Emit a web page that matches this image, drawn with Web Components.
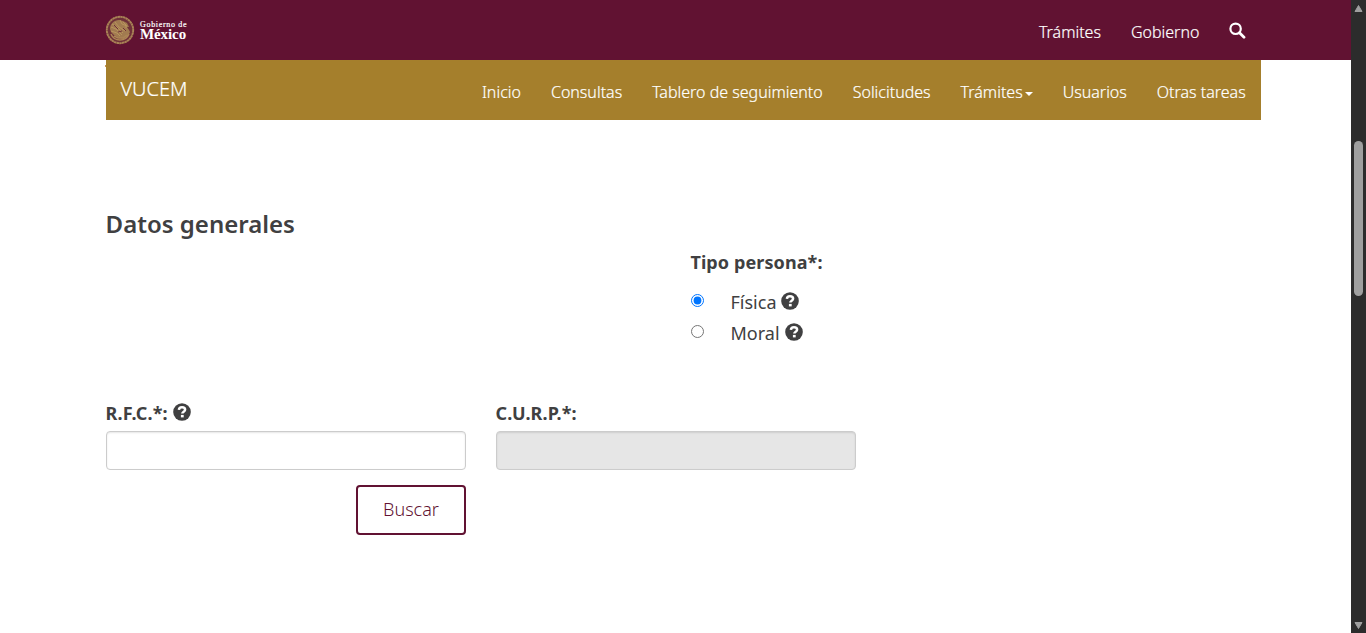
<!DOCTYPE html>
<html lang="es">
<head>
<meta charset="utf-8">
<title>VUCEM</title>
<style>
html,body{margin:0;height:100%;overflow:hidden;background:#fff}
body{font-family:"Noto Sans","Open Sans",sans-serif;font-size:18px;line-height:26px;color:#404041}
</style>
</head>
<body>
<vu-page></vu-page>
<script>
const define=(name,html,setup)=>customElements.define(name,class extends HTMLElement{
  connectedCallback(){
    if(this.shadowRoot)return;
    const root=this.attachShadow({mode:'open'});
    const t=document.createElement('template');
    t.innerHTML=html;
    root.append(t.content.cloneNode(true));
    if(setup)setup(this,root);
  }
});

define('gov-seal',`<style>:host{display:block;width:30px;height:30px}svg{display:block}</style>
<svg width="30" height="30" viewBox="0 0 30 30" fill="none">
<circle cx="15" cy="15" r="14" fill="#6f3039"/>
<circle cx="15" cy="15" r="13.2" stroke-width="1.9" stroke="#a98356" stroke-dasharray="2.4 .3"/>
<path d="M5 14c0-5 4-9 9-9l4 1 4 2 2 4-2 0 2 3 1 2-2 4-4 3-5-1-5-3-3-3z" fill="#a17b50"/>
<path d="M7 9l5 3 6 6M6 12l5 2 6 6M10 7l4 5 6 4M15 5l2 4 5 2M18 7l3 3v3M6 16l6 2 3 3" stroke-width=".9" stroke="#bb965f"/>
<path d="M9 10l4 4M13 17l4-1M18 13l3 3" stroke-width="1" stroke="#6f3039"/>
<path d="M6 19c2 5 5 6 9 6s7-1 9-6M9 21l4 2h5l4-3" stroke-width="1.5" stroke="#ac8555"/>
</svg>`);

define('gov-brand',`<style>:host{display:flex;align-items:center;gap:5px;color:#fff;font-family:"Liberation Serif","Noto Serif",serif;font-weight:700}
.t{display:block;width:48px;white-space:nowrap}.a{display:block;font-size:8px;line-height:8px;letter-spacing:.68px;font-weight:400;-webkit-text-stroke:.2px}.b{display:block;font-size:15px;line-height:10px;letter-spacing:-.1px;font-weight:700}</style>
<gov-seal></gov-seal><span class="t"><span class="a">Gobierno de</span><span class="b">México</span></span>`);

define('nav-link',`<style>:host{display:flex;align-items:center;font-size:16px;line-height:24px;font-weight:300;white-space:nowrap;color:#fff;-webkit-text-stroke:.2px}
i{display:none;border:4px solid transparent;border-top-color:#fff;border-bottom:0;margin:3px 0 0 2px}:host([caret]) i{display:block}</style><slot></slot><i></i>`);

define('gov-bar',`<style>:host{display:flex;justify-content:space-between;height:60px;box-sizing:border-box;padding:0 104.6px 0 105px;background:#611232}
nav{display:flex;gap:30px;padding-top:20px;align-items:flex-start}svg{display:block;margin-top:2px}gov-brand{height:59px}</style>
<gov-brand></gov-brand><nav><nav-link>Trámites</nav-link><nav-link>Gobierno</nav-link>
<svg width="17" height="17" viewBox="0 0 17 17" fill="none" stroke="#fff"><circle cx="6.6" cy="6.8" r="5.2" stroke-width="2.2"/><path d="M10.5 10.7l4.5 4.5" stroke-width="2.8" stroke-linecap="round"/></svg></nav>`);

define('app-bar',`<style>:host{position:relative;display:flex;justify-content:space-between;height:60px;box-sizing:border-box;margin:0 90px 0 106px;padding:0 15.3px 0 14.4px;background:#a57f2c;color:#fff}
:host::before{content:"";position:absolute;left:-1px;top:5px;width:1px;height:2px;background:#c9975a}
b{font-weight:300;font-size:20px;line-height:28px;padding-top:15px;-webkit-text-stroke:.2px}nav{display:flex;gap:30px;padding-top:20px;align-items:flex-start}</style>
<b>VUCEM</b><nav><nav-link>Inicio</nav-link><nav-link>Consultas</nav-link><nav-link>Tablero de seguimiento</nav-link><nav-link>Solicitudes</nav-link><nav-link caret>Trámites</nav-link><nav-link>Usuarios</nav-link><nav-link>Otras tareas</nav-link></nav>`);

define('help-icon',`<style>:host{display:inline-block;width:18px;height:18px;vertical-align:-1px}svg{display:block}</style>
<svg width="18" height="18" viewBox="0 0 18 18"><circle cx="9" cy="9" r="8.8" fill="#404041"/><path d="M5.9 6.9C6 5 7.2 4.3 9 4.3c1.9 0 3.1.9 3.1 2.4 0 2-2.8 2-2.8 3.9" fill="none" stroke="#fff" stroke-width="2.5"/><path d="M7.9 11.9h2.8v2.5H7.9z" fill="#fff"/></svg>`);

define('radio-option',`<style>:host{display:flex;height:31px;align-items:flex-start}input{margin:6px 26.5px 0 1px;width:13px;height:13px;flex:none}label{line-height:28px;white-space:nowrap}help-icon{margin-left:.3px}</style>
<input type="radio"><label><slot></slot> <help-icon></help-icon></label>`,(h,r)=>{r.querySelector('input').checked=h.hasAttribute('checked')});

define('text-field',`<style>:host{display:block;width:360px}label{display:block;font-weight:700;font-size:18px;line-height:26px;height:31px;white-space:nowrap;letter-spacing:.1px;margin-left:-.4px}
input{display:block;box-sizing:border-box;width:100%;height:39px;border:1px solid #ccc;border-radius:4px;background:#fff;box-shadow:inset 0 1px 2px rgba(0,0,0,.1);margin:0;padding:6px 12px;font:inherit}input:disabled{background:#e6e6e6}</style>
<label><slot></slot></label><input>`,(h,r)=>{r.querySelector('input').disabled=h.hasAttribute('disabled')});

define('outline-button',`<style>:host{display:block}button{display:block;box-sizing:border-box;width:110px;height:50px;border:2px solid #611232;border-radius:4px;background:#fff;color:#611232;font:300 18px/26px "Noto Sans",sans-serif;padding:0 0 2px}</style><button><slot></slot></button>`);

define('person-form',`<style>:host{display:block;padding:88px 0 0 106px}
h3{margin:0 0 0 -.4px;font-size:24px;line-height:32px;font-weight:600}
.type{margin:9px 0 0 584px;height:151px}.type strong{display:block;font-weight:700;line-height:26px;height:39px;padding-left:.4px;letter-spacing:.1px}
.row{display:flex;gap:30px}.row help-icon{margin-left:.8px}.action{width:360px;display:flex;justify-content:flex-end;margin-top:15px}</style>
<h3>Datos generales</h3>
<section class="type"><strong>Tipo persona*:</strong><radio-option checked>Física</radio-option><radio-option>Moral</radio-option></section>
<div class="row"><text-field>R.F.C.*: <help-icon></help-icon></text-field><text-field disabled>C.U.R.P.*:</text-field></div>
<div class="action"><outline-button>Buscar</outline-button></div>`);

define('side-scroll',`<style>:host{display:flex;flex-direction:column;width:15px;background:#2c2c2c}svg{display:block}.thumb{width:9px;height:155px;margin:125px 0 0 3px;border-radius:5px;background:#9f9f9f}.down{margin-top:auto}</style>
<svg width="15" height="16"><path d="M7.5 5.5L11 11.5H4z" fill="#9f9f9f" stroke="#9f9f9f" stroke-linejoin="round"/></svg><div class="thumb"></div>
<svg class="down" width="15" height="16"><path d="M4 5.5h7l-3.5 6z" fill="#9f9f9f" stroke="#9f9f9f" stroke-linejoin="round"/></svg>`);

define('vu-page',`<style>:host{display:flex;height:633px}main{flex:1;min-width:0}</style>
<main><gov-bar></gov-bar><app-bar></app-bar><person-form></person-form></main><side-scroll></side-scroll>`);
</script>
</body>
</html>
